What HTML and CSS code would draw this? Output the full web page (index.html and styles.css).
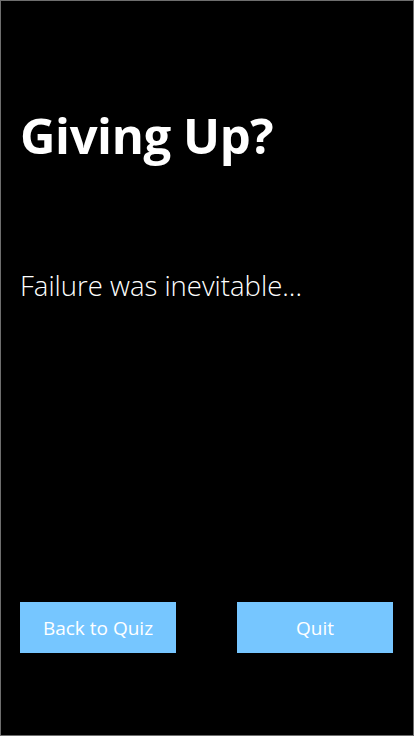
FILE: index.html
```html
<!DOCTYPE html>
<html>
<head>
<meta charset="utf-8">
<link rel="stylesheet" href="styles.css">
</head>
<body>
<div class="screen">
  <h1 class="title">Giving Up?</h1>
  <p class="message">Failure was inevitable...</p>
  <div class="spacer"></div>
  <div class="actions">
    <button class="btn">Back to Quiz</button>
    <button class="btn">Quit</button>
  </div>
</div>
</body>
</html>
```
FILE: styles.css
```css
* { box-sizing: border-box; }
html, body { margin: 0; padding: 0; background: #000; }
.screen {
  width: 414px;
  height: 736px;
  border: 1px solid #6e6e6e;
  background: #000;
  display: flex;
  flex-direction: column;
  padding: 0 20px 0 19px;
  font-family: "Open Sans", "Noto Sans", sans-serif;
  color: #fff;
}
.title {
  margin: 101px 0 0 0;
  font-size: 49px;
  font-weight: 700;
  line-height: 67px;
  letter-spacing: -0.4px;
}
.message {
  margin: 98px 0 0 0;
  font-size: 27.5px;
  font-weight: 300;
  line-height: 38px;
}
.spacer { flex: 1; }
.actions {
  display: flex;
  justify-content: space-between;
  margin-bottom: 82px;
}
.btn {
  width: 156px;
  height: 51px;
  border: 0;
  background: #76c6ff;
  color: #fff;
  font-family: "Open Sans", "Noto Sans", sans-serif;
  font-size: 19px;
  padding: 0;
}
```
